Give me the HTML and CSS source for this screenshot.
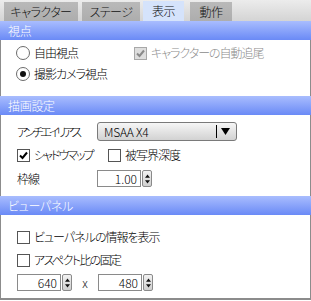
FILE: index.html
```html
<!DOCTYPE html>
<html lang="ja">
<head>
<meta charset="utf-8">
<link rel="stylesheet" href="styles.css">
</head>
<body>
<div class="tabs">
  <div class="tab tab-chara">キャラクター</div>
  <div class="tab tab-stage">ステージ</div>
  <div class="tab tab-view active">表示</div>
  <div class="tab tab-motion">動作</div>
</div>

<div class="section-head">視点</div>
<div class="section-body sec-view">
  <div class="view-grid">
    <label class="opt"><span class="radio"></span>自由視点</label>
    <label class="opt disabled"><span class="check checked dis"><svg viewBox="0 0 11 11"><path d="M2 5.5 L4.5 8 L9 2.5" /></svg></span>キャラクターの自動追尾</label>
    <label class="opt"><span class="radio on"></span>撮影カメラ視点</label>
  </div>
</div>

<div class="section-head">描画設定</div>
<div class="section-body sec-draw">
  <div class="form-row">
    <span class="label label-aa">アンチエイリアス</span>
    <div class="select">
      <span class="select-text">MSAA X4</span>
      <span class="select-bar"></span>
      <svg class="select-arrow" viewBox="0 0 9 7"><path d="M0 0 H9 L4.5 7 Z"/></svg>
    </div>
  </div>
  <div class="check-row">
    <label class="opt opt-shadow"><span class="check checked"><svg viewBox="0 0 11 11"><path d="M2 5.5 L4.5 8 L9 2.5" /></svg></span>シャドウマップ</label>
    <label class="opt"><span class="check"></span>被写界深度</label>
  </div>
  <div class="form-row">
    <span class="label">枠線</span>
    <div class="spin">
      <span class="spin-input">1.00</span>
      <span class="spin-btn"><svg viewBox="0 0 6 11"><path d="M3 0 L6 4 H0 Z M0 7 H6 L3 11 Z"/></svg></span>
    </div>
  </div>
</div>

<div class="section-head">ビューパネル</div>
<div class="section-body sec-panel">
  <label class="opt"><span class="check"></span>ビューパネルの情報を表示</label>
  <label class="opt opt-aspect"><span class="check"></span>アスペクト比の固定</label>
  <div class="size-row">
    <div class="spin">
      <span class="spin-input">640</span>
      <span class="spin-btn"><svg viewBox="0 0 6 11"><path d="M3 0 L6 4 H0 Z M0 7 H6 L3 11 Z"/></svg></span>
    </div>
    <span class="times">x</span>
    <div class="spin">
      <span class="spin-input">480</span>
      <span class="spin-btn"><svg viewBox="0 0 6 11"><path d="M3 0 L6 4 H0 Z M0 7 H6 L3 11 Z"/></svg></span>
    </div>
  </div>
</div>
<div class="bottom"></div>
</body>
</html>
```

FILE: styles.css
```css
html, body {
  margin: 0;
  padding: 0;
  background: #ffffff;
}
body {
  width: 311px;
  height: 301px;
  overflow: hidden;
  font-family: "Noto Sans CJK JP", "Noto Sans", sans-serif;
  font-size: 12px;
  font-weight: 300;
  font-feature-settings: "palt";
  letter-spacing: -1px;
  color: #000;
  line-height: 1;
}

/* tabs */
.tabs {
  display: flex;
  align-items: flex-end;
  height: 21px;
  background: linear-gradient(#ececec, #d4d4d4);
  padding-left: 4px;
  box-sizing: border-box;
}
.tab {
  height: 19px;
  display: flex;
  align-items: center;
  justify-content: center;
  background: linear-gradient(#b9b9b9, #adadad);
  color: #111;
  letter-spacing: -0.5px;
}
.tab-chara { width: 74px; }
.tab-stage { width: 58px; margin-left: 4px; }
.tab-view { width: 41px; margin-left: 3px; }
.tab-motion { width: 42px; margin-left: 6px; }
.tab.active {
  height: 20px;
  background: #d5e3fb;
}

/* section headers */
.section-head {
  height: 19px;
  display: flex;
  align-items: center;
  padding-left: 8px;
  color: #fff;
  background: linear-gradient(#a9bdfe, #6a8af6);
  letter-spacing: -0.3px;
}
.section-body {
  border-left: 1px solid #8c8c8c;
  border-right: 1px solid #8c8c8c;
  background: #fff;
  box-sizing: border-box;
}

/* options */
.opt {
  display: flex;
  align-items: center;
  gap: 4px;
  height: 20px;
  white-space: nowrap;
}
.opt.disabled { color: #8c8c8c; }
.radio {
  width: 12px;
  height: 12px;
  border: 1px solid #6c6c6c;
  border-radius: 50%;
  background: #fff;
  display: flex;
  align-items: center;
  justify-content: center;
  flex: none;
}
.radio.on::after {
  content: "";
  width: 6px;
  height: 6px;
  border-radius: 50%;
  background: #111;
}
.check {
  width: 11px;
  height: 11px;
  border: 1px solid #555;
  background: #fff;
  flex: none;
  display: flex;
  align-items: center;
  justify-content: center;
}
.check svg {
  width: 11px;
  height: 11px;
  fill: none;
  stroke: #000;
  stroke-width: 2;
}
.check.dis {
  background: #dedede;
  border-color: #a8a8a8;
}
.check.dis svg { stroke: #8a8a8a; }

/* section 1 */
.sec-view {
  height: 56px;
  padding: 3px 0 0 15px;
}
.view-grid {
  display: grid;
  grid-template-columns: 118px 1fr;
  row-gap: 1px;
}

/* section 2 */
.sec-draw {
  height: 81px;
  padding: 7px 0 0 16px;
  display: flex;
  flex-direction: column;
  gap: 4px;
}
.form-row {
  display: flex;
  align-items: center;
  height: 19px;
}
.label {
  width: 80px;
  flex: none;
  white-space: nowrap;
}
.label-aa { letter-spacing: -3px; }
.check-row {
  display: grid;
  grid-template-columns: 91px auto;
  justify-content: start;
  align-items: center;
  height: 20px;
}
.check-row .opt { height: 20px; }
.opt-shadow { letter-spacing: -2px; }
.opt-aspect { letter-spacing: -1.6px; }

.select {
  width: 140px;
  height: 19px;
  box-sizing: border-box;
  border: 1px solid #7a7a7a;
  border-radius: 3px;
  background: linear-gradient(#f6f6f6, #d2d2d2);
  display: flex;
  align-items: center;
  padding-left: 6px;
}
.select-text {
  flex: 1;
  letter-spacing: -0.2px;
}
.select-bar {
  width: 1px;
  height: 13px;
  background: #000;
  margin-right: 4px;
}
.select-arrow {
  width: 9px;
  height: 7px;
  margin-right: 6px;
  fill: #000;
}

.spin {
  display: flex;
  align-items: center;
  gap: 1px;
}
.spin-input {
  width: 44px;
  height: 17px;
  box-sizing: border-box;
  border: 1px solid #8a8a8a;
  background: #fff;
  display: flex;
  align-items: center;
  justify-content: flex-end;
  padding-right: 3px;
  letter-spacing: 0;
}
.spin-btn {
  width: 10px;
  height: 17px;
  box-sizing: border-box;
  border: 1px solid #8a8a8a;
  border-radius: 2px;
  background: linear-gradient(#f2f2f2, #cfcfcf);
  display: flex;
  align-items: center;
  justify-content: center;
}
.spin-btn svg {
  width: 5px;
  height: 10px;
  fill: #111;
}

/* section 3 */
.sec-panel {
  height: 83px;
  padding: 12px 0 0 16px;
  display: flex;
  flex-direction: column;
  gap: 3px;
}
.sec-panel .opt { height: 20px; }
.size-row {
  display: flex;
  align-items: center;
  height: 17px;
  margin-top: 1px;
}
.times {
  width: 26px;
  text-align: center;
  color: #222;
  letter-spacing: 0;
}
.bottom {
  height: 2px;
  background: #8c8c8c;
}
```
